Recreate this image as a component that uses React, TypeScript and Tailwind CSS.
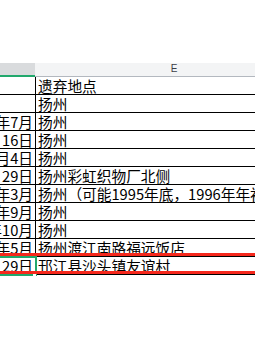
import React from "react";

interface SheetRow {
  date: string;
  place: string;
}

const rows: SheetRow[] = [
  { date: "", place: "遗弃地点" },
  { date: "", place: "扬州" },
  { date: "1996年7月", place: "扬州" },
  { date: "16日", place: "扬州" },
  { date: "1998年4月4日", place: "扬州" },
  { date: "1999年9月29日", place: "扬州彩虹织物厂北侧" },
  { date: "2000年3月", place: "扬州（可能1995年底，1996年年初）" },
  { date: "2001年9月", place: "扬州" },
  { date: "2002年10月", place: "扬州" },
  { date: "2003年5月", place: "扬州渡江南路福远饭店" },
  { date: "2004年6月29日", place: "邗江县沙头镇友谊村" },
];

const cellFont = {
  fontFamily: '"SimSun", "Noto Sans CJK SC", sans-serif',
};

const App: React.FC = () => {
  const last = rows.length - 1;

  return (
    <div className="w-[255px] h-[340px] bg-white overflow-hidden" style={cellFont}>
      <div className="h-[63px]" />

      {/* column headers */}
      <div className="flex h-[14px]">
        <div className="w-[35px] shrink-0 bg-[#d9dbdd] border-b-2 border-[#21a86c]" />
        <div className="w-[278px] shrink-0 bg-[#f3f4f5] border-b border-[#b3b8bf] flex justify-center text-[10px] leading-[11px] text-[#3a3f47] font-['Liberation_Sans',sans-serif]">
          E
        </div>
      </div>

      {/* data rows */}
      <div className="relative">
        {rows.map((row, i) => (
          <div
            key={i}
            className={`flex border-b border-black ${i === 0 ? "h-[18px]" : "h-[18px]"}`}
          >
            <div className="w-[36px] shrink-0 border-r border-black overflow-hidden flex justify-end items-end pr-[2px]">
              <span className="whitespace-nowrap text-[14.7px] leading-[16px] text-black">
                {row.date}
              </span>
            </div>
            <div className="w-[278px] shrink-0 overflow-hidden flex items-end pl-[2px]">
              <span className="whitespace-nowrap text-[14.7px] leading-[16px] text-black">
                {row.place}
              </span>
            </div>
          </div>
        ))}

        {/* selected cell frame */}
        <div
          className="absolute left-[-4px] w-[41px] h-[20px] border-2 border-[#21a86c]"
          style={{ top: last * 18 - 1 }}
        />
        <div
          className="absolute left-[33px] w-[3px] h-[3px] bg-white"
          style={{ top: last * 18 + 16 }}
        />

        {/* red marker lines around the last row */}
        <div
          className="absolute left-0 right-0 h-[3px] bg-[#f5281c]"
          style={{ top: last * 18 - 4 }}
        />
        <div
          className="absolute left-0 right-0 h-[3px] bg-[#f5281c]"
          style={{ top: last * 18 + 14 }}
        />
      </div>
    </div>
  );
};

export default App;
